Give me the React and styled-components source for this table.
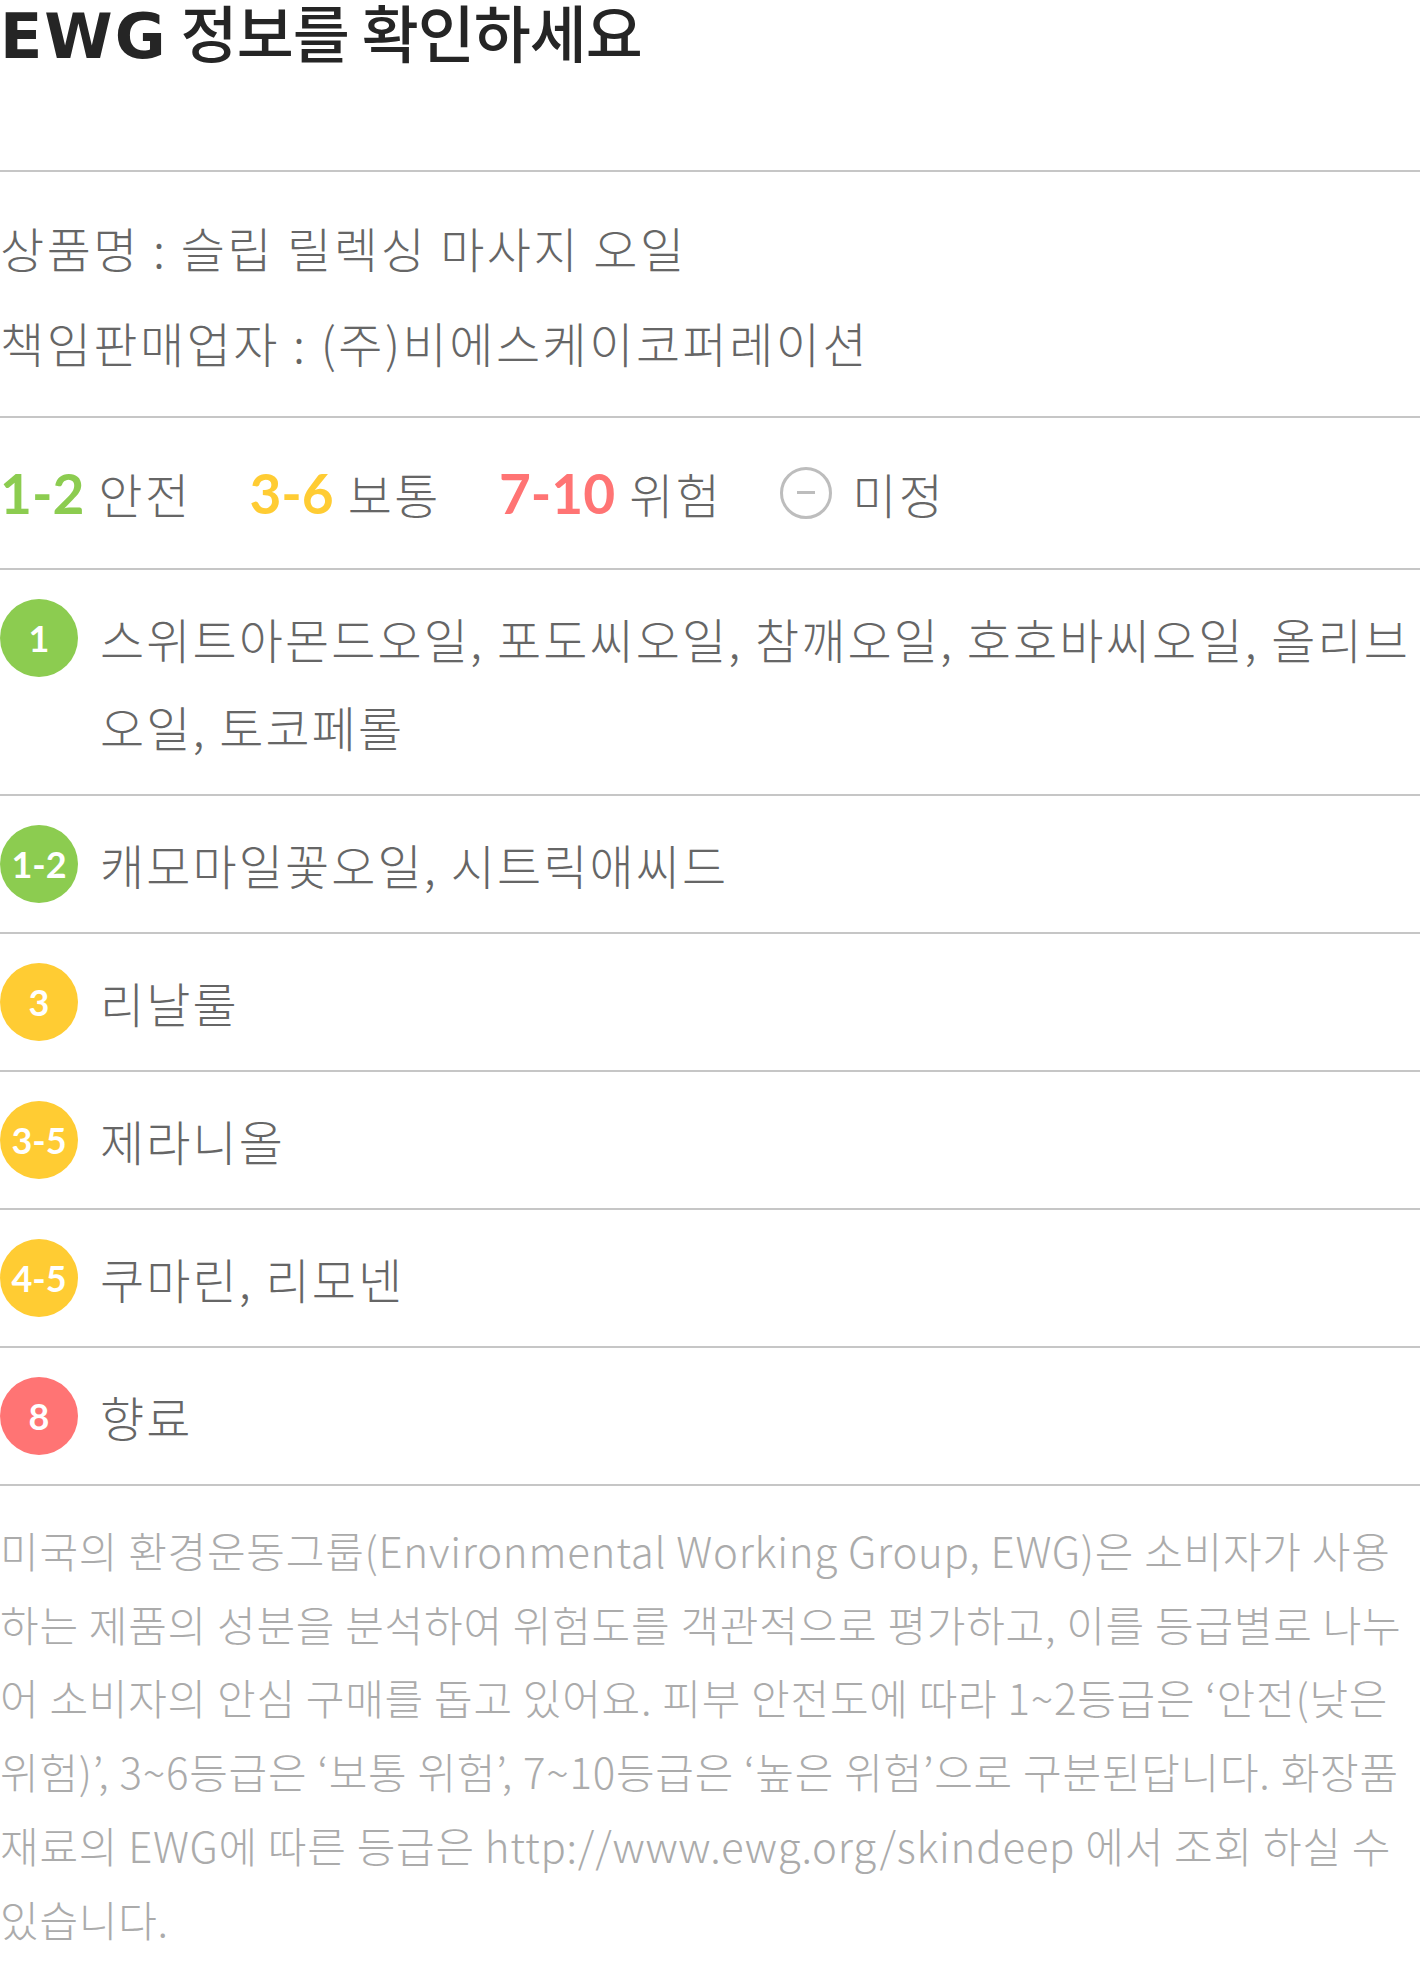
import React from 'react';
import styled, { createGlobalStyle } from 'styled-components';

const GlobalStyle = createGlobalStyle`
  body {
    margin: 0;
    background: #fff;
    font-family: 'Noto Sans CJK KR', 'Noto Sans', sans-serif;
  }
`;

const COLORS = {
  green: '#8ccc50',
  yellow: '#ffcc33',
  red: '#ff7474',
  line: '#c6c6c6',
};

const Page = styled.div`
  width: 1420px;
`;

const Title = styled.h2`
  margin: 0;
  height: 170px;
  font-size: 62px;
  line-height: 62px;
  font-weight: 500;
  color: #252525;
  letter-spacing: -1px;

  b {
    font-family: 'DejaVu Sans', 'Noto Sans', sans-serif;
    font-weight: 700;
    letter-spacing: 2px;
  }
`;

const Section = styled.div`
  border-top: 2px solid ${COLORS.line};
`;

const Info = styled(Section)`
  padding: 28px 0 26px;

  p {
    margin: 0;
    font-size: 48px;
    line-height: 95px;
    font-weight: 300;
    letter-spacing: 2.5px;
    color: #666;
  }
`;

const Legend = styled(Section)`
  display: flex;
  align-items: center;
  height: 150px;
`;

const LegendItem = styled.div`
  display: flex;
  align-items: center;
  gap: ${(p) => (p.icon ? '20px' : '14px')};
  margin-right: 58px;
  font-size: 48px;
  font-weight: 300;
  letter-spacing: 2.4px;
  color: #666;
`;

const Grade = styled.span`
  font-family: Lato, 'Noto Sans', sans-serif;
  font-weight: 700;
  font-size: 55px;
  letter-spacing: 0;
  color: ${(p) => p.color};
`;

const Unknown = styled.span`
  display: inline-block;
  box-sizing: border-box;
  width: 52px;
  height: 52px;
  border: 3px solid #bdbdbd;
  border-radius: 50%;
  position: relative;

  &::after {
    content: '';
    position: absolute;
    left: 14px;
    right: 14px;
    top: 21px;
    height: 3px;
    background: #bdbdbd;
  }
`;

const Row = styled(Section)`
  display: flex;
  align-items: flex-start;
  gap: 22px;
  padding: 24px 0;
`;

const Badge = styled.span`
  flex: 0 0 78px;
  height: 78px;
  margin-top: 5px;
  border-radius: 50%;
  background: ${(p) => p.color};
  color: #fff;
  display: flex;
  align-items: center;
  justify-content: center;
  font-family: Lato, 'Noto Sans', sans-serif;
  font-weight: 700;
  font-size: 36px;
`;

const RowText = styled.div`
  font-size: 48px;
  line-height: 88px;
  font-weight: 300;
  letter-spacing: 2.1px;
  color: #666;
`;

const Note = styled(Section)`
  padding: 27px 0 0;

  p {
    margin: 0;
    font-size: 42px;
    line-height: 73.7px;
    font-weight: 300;
    color: #ababab;
    letter-spacing: 0.75px;
  }
`;

const ingredients = [
  { grade: '1', color: COLORS.green, text: '스위트아몬드오일, 포도씨오일, 참깨오일, 호호바씨오일, 올리브오일, 토코페롤' },
  { grade: '1-2', color: COLORS.green, text: '캐모마일꽃오일, 시트릭애씨드' },
  { grade: '3', color: COLORS.yellow, text: '리날룰' },
  { grade: '3-5', color: COLORS.yellow, text: '제라니올' },
  { grade: '4-5', color: COLORS.yellow, text: '쿠마린, 리모넨' },
  { grade: '8', color: COLORS.red, text: '향료' },
];

const App = () => {
  return (
    <Page>
      <GlobalStyle />
      <Title>
        <b>EWG</b> 정보를 확인하세요
      </Title>
      <Info>
        <p>상품명 : 슬립 릴렉싱 마사지 오일</p>
        <p>책임판매업자 : (주)비에스케이코퍼레이션</p>
      </Info>
      <Legend>
        <LegendItem>
          <Grade color={COLORS.green}>1-2</Grade>안전
        </LegendItem>
        <LegendItem>
          <Grade color={COLORS.yellow}>3-6</Grade>보통
        </LegendItem>
        <LegendItem>
          <Grade color={COLORS.red}>7-10</Grade>위험
        </LegendItem>
        <LegendItem icon>
          <Unknown />미정
        </LegendItem>
      </Legend>
      {ingredients.map(({ grade, color, text }) => (
        <Row key={grade}>
          <Badge color={color}>{grade}</Badge>
          <RowText>{text}</RowText>
        </Row>
      ))}
      <Note>
        <p>
          미국의 환경운동그룹(Environmental Working Group, EWG)은 소비자가 사용하는 제품의 성분을 분석하여
          위험도를 객관적으로 평가하고, 이를 등급별로 나누어 소비자의 안심 구매를 돕고 있어요. 피부 안전도에
          따라 1~2등급은 ‘안전(낮은 위험)’, 3~6등급은 ‘보통 위험’, 7~10등급은 ‘높은 위험’으로 구분된답니다.
          화장품 재료의 EWG에 따른 등급은 http://www.ewg.org/skindeep 에서 조회 하실 수 있습니다.
        </p>
      </Note>
    </Page>
  );
};

export default App;
